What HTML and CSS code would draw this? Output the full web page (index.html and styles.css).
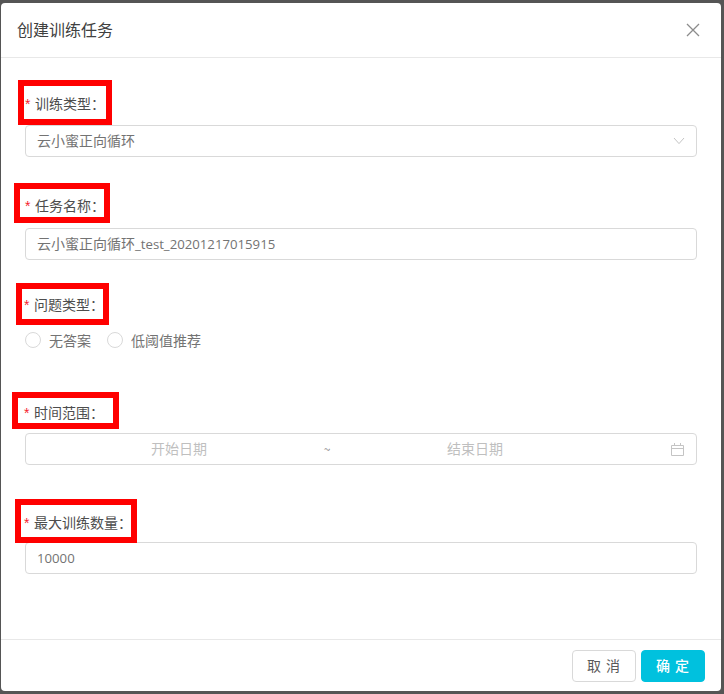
FILE: index.html
```html
<!DOCTYPE html>
<html lang="zh-CN">
<head>
<meta charset="utf-8">
<title>创建训练任务</title>
<link rel="stylesheet" href="styles.css">
</head>
<body>
<div class="modal">
  <header class="modal-head">
    <h1 class="modal-title">创建训练任务</h1>
    <svg class="close-icon" width="14" height="14" viewBox="0 0 14 14"><path d="M1 1l12 12M13 1L1 13" fill="none" stroke="#8c8c8c" stroke-width="1.3"/></svg>
  </header>
  <form class="modal-body">
    <div class="field field-type">
      <label class="label"><span class="req">*</span>训练类型：</label>
      <div class="control">
        <span class="value">云小蜜正向循环</span>
        <svg class="chevron" width="12" height="8" viewBox="0 0 12 8"><path d="M1 1l5 5.6L11 1" fill="none" stroke="#c4c4c4" stroke-width="1"/></svg>
      </div>
    </div>
    <div class="field field-name">
      <label class="label"><span class="req">*</span>任务名称：</label>
      <div class="control"><span class="value">云小蜜正向循环<span class="latin">_test_20201217015915</span></span></div>
    </div>
    <div class="field field-issue">
      <label class="label label-shift"><span class="req">*</span>问题类型：</label>
      <div class="radios">
        <span class="radio"><i class="dot"></i>无答案</span>
        <span class="radio"><i class="dot"></i>低阈值推荐</span>
      </div>
    </div>
    <div class="field field-time">
      <label class="label label-shift"><span class="req">*</span>时间范围：</label>
      <div class="control range">
        <span class="range-part">开始日期</span>
        <span class="tilde">~</span>
        <span class="range-part">结束日期</span>
        <svg class="calendar" width="13" height="13" viewBox="0 0 13 13"><path d="M.5 2.5h12v10H.5zM.5 5.5h12M3.5 0v3M9.5 0v3" fill="none" stroke="#c4c4c4" stroke-width="1"/></svg>
      </div>
    </div>
    <div class="field field-max">
      <label class="label label-shift"><span class="req">*</span>最大训练数量：</label>
      <div class="control"><span class="value"><span class="latin">10000</span></span></div>
    </div>
  </form>
  <footer class="modal-foot">
    <button class="btn btn-cancel" type="button">取 消</button>
    <button class="btn btn-ok" type="button">确 定</button>
  </footer>
  <i class="mark mark-1"></i>
  <i class="mark mark-2"></i>
  <i class="mark mark-3"></i>
  <i class="mark mark-4"></i>
  <i class="mark mark-5"></i>
</div>
</body>
</html>
```
FILE: styles.css
```css
* { box-sizing: border-box; }
html, body { margin: 0; height: 100%; }
body {
  background: #555;
  font-family: "Noto Sans CJK SC", "Open Sans", sans-serif;
  font-size: 14px;
  color: #595959;
  padding: 3px 3px 3px 1px;
  overflow: hidden;
}
.modal {
  position: relative;
  height: 688px;
  background: #fff;
  border-radius: 4px;
  display: flex;
  flex-direction: column;
}
.modal-head {
  height: 55px;
  flex: none;
  border-bottom: 1px solid #e8e8e8;
  display: flex;
  align-items: center;
  justify-content: space-between;
  padding: 0 21px 2px 16px;
}
.modal-title { margin: 0; font-size: 16px; font-weight: 400; line-height: 22px; color: #404040; }
.close-icon { margin-top: 2px; }
.modal-body { flex: 1; padding: 0 24px; }
.field-type { padding-top: 34px; }
.field-name { padding-top: 37px; }
.field-issue { padding-top: 33px; }
.field-time { padding-top: 50px; }
.field-max { padding-top: 46px; }
.label { display: block; height: 22px; line-height: 22px; margin-bottom: 11px; color: #4d4d4d; font-size: 14px; white-space: nowrap; }
.field-name .label { margin-bottom: 12px; }
.field-time .label { margin-bottom: 10px; }
.field-max .label { margin-bottom: 9px; }
.label-shift { margin-left: -1px; }
.req { color: #f5222d; display: inline-block; width: 10px; font-family: "Liberation Sans", sans-serif; }
.control {
  position: relative;
  height: 32px;
  border: 1px solid #d9d9d9;
  border-radius: 4px;
  display: flex;
  align-items: center;
  padding: 0 11px 2px 11px;
  color: #737373;
}
.value { line-height: 22px; flex: 1; white-space: nowrap; }
.latin { font-family: "Open Sans", sans-serif; font-size: 13.2px; }
.chevron { flex: none; margin-top: 2px; }
.radios { display: flex; gap: 16px; height: 22px; align-items: center; margin-top: 14px; color: #737373; font-size: 14px; }
.radio { display: flex; align-items: center; gap: 8px; }
.dot { width: 16px; height: 16px; border: 1px solid #d9d9d9; border-radius: 50%; background: #fff; }
.range { color: #bfbfbf; padding-right: 12px; }
.range-part { flex: none; width: 284px; text-align: center; }
.tilde { flex: none; width: 12px; text-align: center; color: #8c8c8c; font-size: 12px; }
.calendar { flex: none; margin-left: auto; margin-top: 2px; }
.modal-foot {
  height: 52px;
  flex: none;
  border-top: 1px solid #e8e8e8;
  display: flex;
  justify-content: flex-end;
  align-items: flex-start;
  gap: 5px;
  padding: 10px 16px 0 0;
}
.btn { height: 32px; width: 64px; border-radius: 4px; font: inherit; padding: 0 0 2px; cursor: pointer; letter-spacing: 1px; }
.btn-cancel { background: #fff; border: 1px solid #d9d9d9; color: #595959; }
.btn-ok { background: #00c1de; border: 1px solid #00c1de; color: #fff; font-weight: 500; }
.mark { position: absolute; border: 6px solid #f00; }
.mark-1 { left: 17px; top: 77px; width: 94px; height: 45px; }
.mark-2 { left: 13px; top: 180px; width: 96px; height: 40px; }
.mark-3 { left: 15px; top: 280px; width: 93px; height: 42px; }
.mark-4 { left: 11px; top: 389px; width: 107px; height: 37px; }
.mark-5 { left: 14px; top: 496px; width: 122px; height: 44px; }
```
